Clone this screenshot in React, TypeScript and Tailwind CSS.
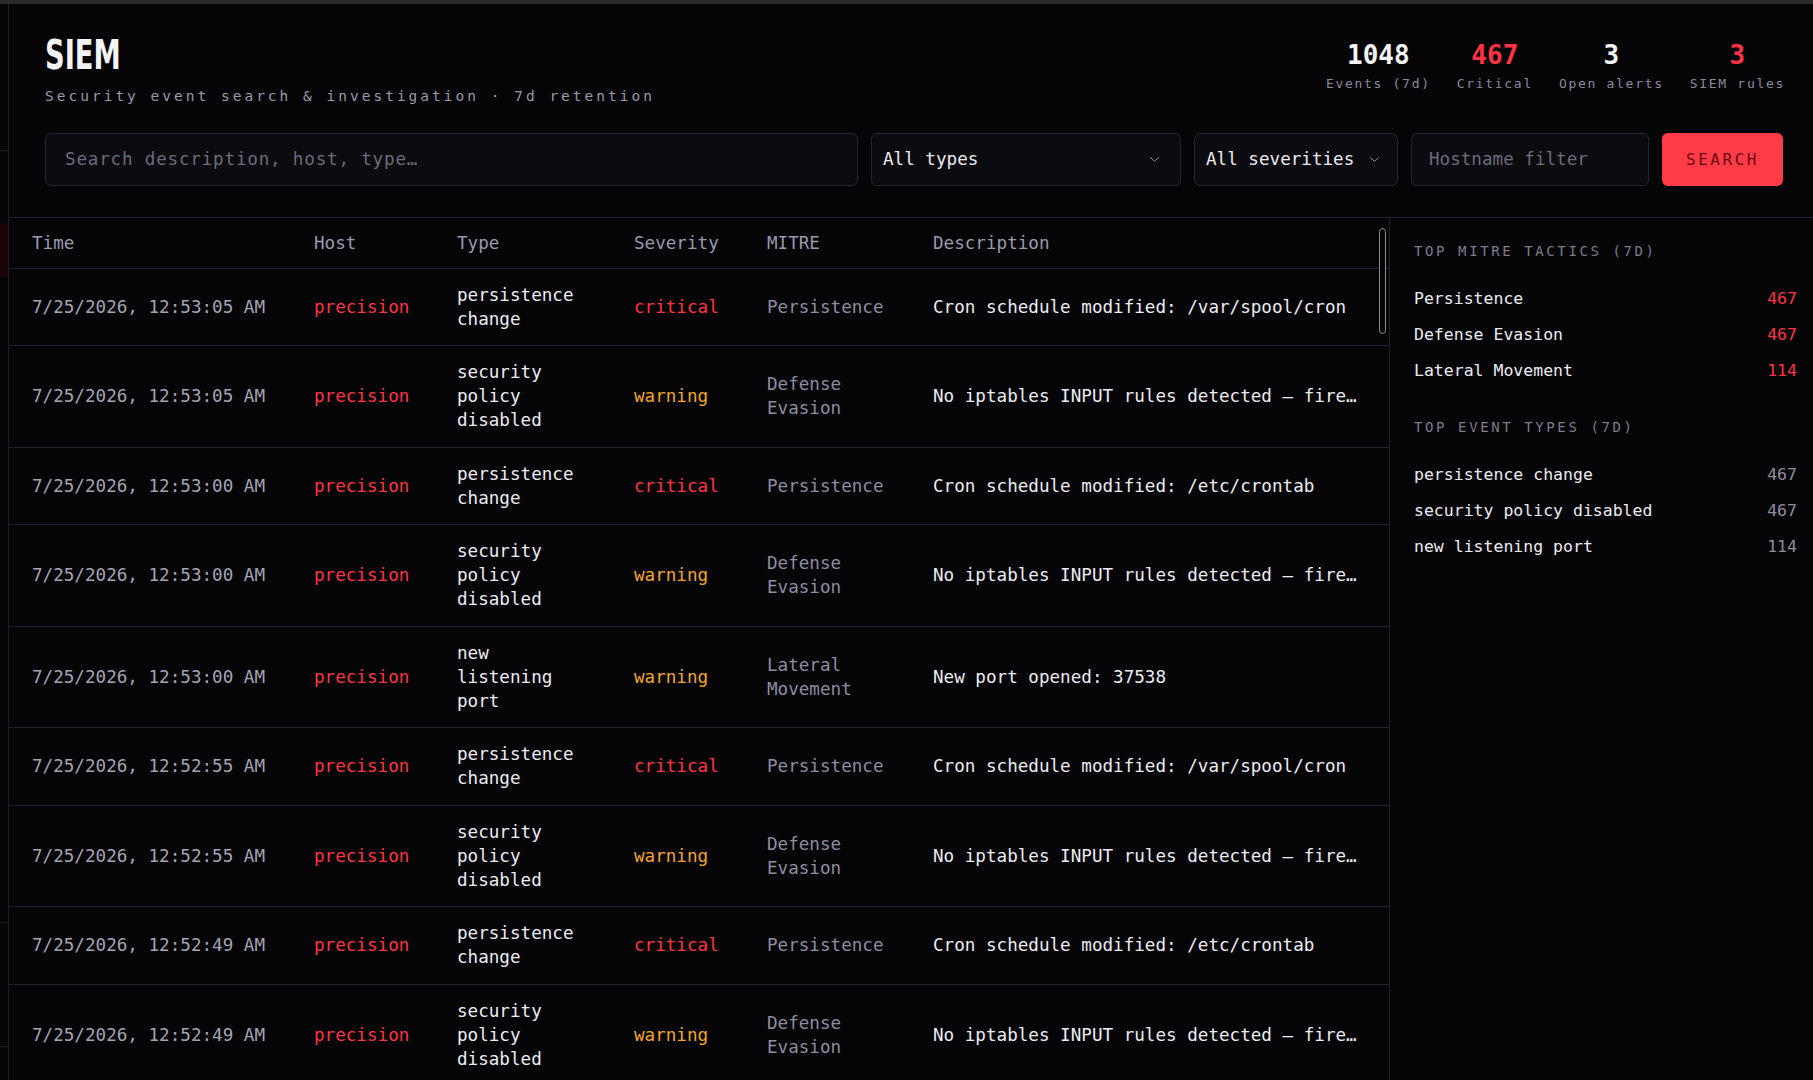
import { ChevronDown } from "lucide-react";

type Severity = "critical" | "warning";

type EventRow = {
  time: string;
  host: string;
  type: string;
  severity: Severity;
  mitre: string;
  description: string;
};

const persistence = (time: string, path: string): EventRow => ({
  time,
  host: "precision",
  type: "persistence change",
  severity: "critical",
  mitre: "Persistence",
  description: `Cron schedule modified: ${path}`,
});

const firewall = (time: string): EventRow => ({
  time,
  host: "precision",
  type: "security policy disabled",
  severity: "warning",
  mitre: "Defense Evasion",
  description: "No iptables INPUT rules detected — firewall may be disabled",
});

const rows: EventRow[] = [
  persistence("7/25/2026, 12:53:05 AM", "/var/spool/cron"),
  firewall("7/25/2026, 12:53:05 AM"),
  persistence("7/25/2026, 12:53:00 AM", "/etc/crontab"),
  firewall("7/25/2026, 12:53:00 AM"),
  {
    time: "7/25/2026, 12:53:00 AM",
    host: "precision",
    type: "new listening port",
    severity: "warning",
    mitre: "Lateral Movement",
    description: "New port opened: 37538",
  },
  persistence("7/25/2026, 12:52:55 AM", "/var/spool/cron"),
  firewall("7/25/2026, 12:52:55 AM"),
  persistence("7/25/2026, 12:52:49 AM", "/etc/crontab"),
  firewall("7/25/2026, 12:52:49 AM"),
  persistence("7/25/2026, 12:52:44 AM", "/var/spool/cron"),
];

const stats = [
  { value: "1048", label: "Events (7d)", red: false },
  { value: "467", label: "Critical", red: true },
  { value: "3", label: "Open alerts", red: false },
  { value: "3", label: "SIEM rules", red: true },
];

const tactics = [
  { label: "Persistence", count: 467 },
  { label: "Defense Evasion", count: 467 },
  { label: "Lateral Movement", count: 114 },
];

const eventTypes = [
  { label: "persistence change", count: 467 },
  { label: "security policy disabled", count: 467 },
  { label: "new listening port", count: 114 },
];

function SideList({ title, items, red }: { title: string; items: { label: string; count: number }[]; red?: boolean }) {
  return (
    <div>
      <p className="text-[14px] leading-5 tracking-[2.6px] uppercase text-[#7c7c8c]">{title}</p>
      <div className="mt-[20px]">
        {items.map((item) => (
          <div key={item.label} className="flex h-9 items-center justify-between text-[16.5px]">
            <span className="text-[#ececf1]">{item.label}</span>
            <span className={red ? "text-[#ff3344]" : "text-[#8e8e9e]"}>{item.count}</span>
          </div>
        ))}
      </div>
    </div>
  );
}

export default function App() {
  return (
    <div className="flex h-screen flex-col overflow-hidden bg-[#050507] font-['DejaVu_Sans_Mono',monospace] text-[#ececf1]">
      <div className="h-1 shrink-0 bg-[#2c2c2e]" />
      <div className="flex min-h-0 flex-1">
        {/* collapsed nav rail */}
        <aside className="flex w-[9px] shrink-0 flex-col border-r border-[#1e1e28]">
          <div className="h-[146px]" />
          <div className="h-px bg-[#1e1e28]" />
          <div className="h-[72px]" />
          <div className="h-[54px] bg-[#1a0607]" />
          <div className="h-[645px]" />
          <div className="h-px bg-[#1e1e28]" />
          <div className="h-[123px]" />
          <div className="h-px bg-[#1e1e28]" />
        </aside>

        <main className="flex min-w-0 flex-1 flex-col">
          <header className="flex items-start justify-between pl-[36px] pr-[28px] pt-[31px]">
            <div>
              <h1 className="block origin-left scale-x-[0.76] font-['DejaVu_Sans_Condensed','DejaVu_Sans',sans-serif] text-[40px] font-bold leading-[40px] text-[#f4f4f6]">
                SIEM
              </h1>
              <p className="mt-[11px] text-[14.5px] leading-5 tracking-[3px] text-[#9a9aa8]">
                Security event search &amp; investigation · 7d retention
              </p>
            </div>
            <div className="mt-[5px] flex gap-[26px]">
              {stats.map((s) => (
                <div key={s.label} className="flex flex-col items-center">
                  <span className={`text-[26px] font-bold leading-[30px] ${s.red ? "text-[#ff3344]" : "text-[#f4f4f6]"}`}>
                    {s.value}
                  </span>
                  <span className="mt-[5px] text-[13px] leading-[18px] tracking-[1.7px] text-[#8a8a9a]">{s.label}</span>
                </div>
              ))}
            </div>
          </header>

          <div className="mt-[27px] flex h-[53px] gap-[13px] pl-[36px] pr-[28px]">
            <div className="flex w-[813px] items-center rounded-md border border-[#262630] bg-[#0b0b10] px-[19px] text-[17.6px] tracking-[0.8px] text-[#6c6c7a]">
              Search description, host, type…
            </div>
            <div className="flex w-[310px] items-center justify-between rounded-md border border-[#262630] bg-[#0b0b10] pl-[11px] pr-[18px] text-[17.6px] text-[#ececf1]">
              <span>All types</span>
              <ChevronDown className="h-[15px] w-[15px] text-[#9a9aa8]" strokeWidth={1.5} />
            </div>
            <div className="flex w-[204px] items-center justify-between rounded-md border border-[#262630] bg-[#0b0b10] pl-[11px] pr-[15px] text-[17.6px] text-[#ececf1]">
              <span>All severities</span>
              <ChevronDown className="h-[15px] w-[15px] text-[#9a9aa8]" strokeWidth={1.5} />
            </div>
            <div className="flex w-[238px] items-center rounded-md border border-[#262630] bg-[#0b0b10] px-[17px] text-[17.6px] text-[#6c6c7a]">
              Hostname filter
            </div>
            <button className="flex w-[121px] items-center justify-center rounded-md bg-[#ff3b47] text-[16px] tracking-[2.5px] text-[#6b0810]">
              SEARCH
            </button>
          </div>

          <div className="mt-[31px] flex min-h-0 flex-1 border-t border-[#22222e]">
            <section className="relative w-[1380px] shrink-0 overflow-hidden">
              <table className="w-[1380px] table-fixed border-collapse text-left text-[17.6px] leading-6">
                <colgroup>
                  <col className="w-[281px]" />
                  <col className="w-[143px]" />
                  <col className="w-[177px]" />
                  <col className="w-[133px]" />
                  <col className="w-[166px]" />
                  <col />
                </colgroup>
                <thead>
                  <tr className="h-[50px] border-b border-[#22222e] text-[#9a9aae]">
                    <th className="pl-[23px] pr-6 font-normal">Time</th>
                    <th className="px-6 font-normal">Host</th>
                    <th className="px-6 font-normal">Type</th>
                    <th className="px-6 font-normal">Severity</th>
                    <th className="px-6 font-normal">MITRE</th>
                    <th className="px-6 font-normal">Description</th>
                  </tr>
                </thead>
                <tbody>
                  {rows.map((row, i) => (
                    <tr key={i} className="border-b border-[#22222e] align-middle">
                      <td className="py-[14.25px] pl-[23px] pr-6 whitespace-nowrap text-[#a4a4b4]">{row.time}</td>
                      <td className="px-6 py-[14.25px] text-[#ff3344]">{row.host}</td>
                      <td className="px-6 py-[14.25px] text-[#ececf1]">{row.type}</td>
                      <td className={`px-6 py-[14.25px] ${row.severity === "critical" ? "text-[#ff3344]" : "text-[#f5a524]"}`}>
                        {row.severity}
                      </td>
                      <td className="px-6 py-[14.25px] text-[#8e8ea0]">{row.mitre}</td>
                      <td className="truncate px-6 py-[14.25px] text-[#ececf1]">{row.description}</td>
                    </tr>
                  ))}
                </tbody>
              </table>
              <div className="absolute left-[1370px] top-[10px] h-[106px] w-[7px] rounded-full border border-[#8a8a90] bg-[#050507]" />
            </section>

            <aside className="flex-1 border-l border-[#22222e] pl-6 pr-4 pt-[23px]">
              <SideList title="Top MITRE tactics (7d)" items={tactics} red />
              <div className="mt-[28px]">
                <SideList title="Top event types (7d)" items={eventTypes} />
              </div>
            </aside>
          </div>
        </main>
      </div>
    </div>
  );
}
